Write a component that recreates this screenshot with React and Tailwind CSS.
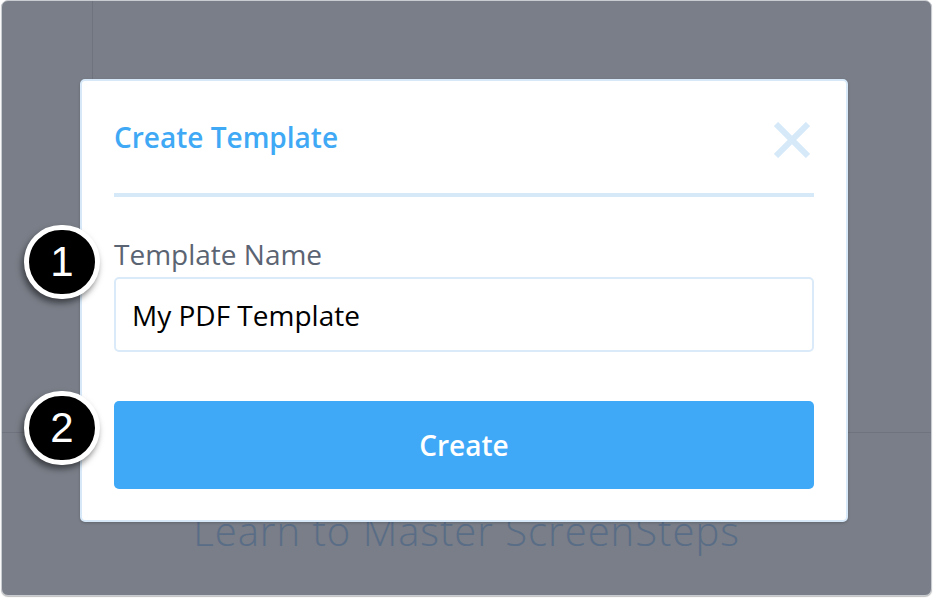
export default function App() {
  const font = { fontFamily: '"Open Sans", "Noto Sans", sans-serif' };
  const digit = { fontFamily: '"Liberation Sans", Arial, sans-serif' };
  return (
    <div className="relative w-[934px] h-[598px] bg-white overflow-hidden" style={font}>
      {/* background app frame */}
      <div className="absolute left-[1px] top-0 w-[931px] h-[596px] rounded-[7px] border border-[#c9ccd0] bg-[#797e88] overflow-hidden flex flex-col shadow-[0_1px_1px_rgba(0,0,0,0.25)]">
        <div className="h-[432px] shrink-0 flex border-b border-[#6f737d]">
          <div className="w-[91px] border-r border-[#6f737d]" />
          <div className="flex-1" />
        </div>
        <div className="flex-1 flex justify-center pt-[78px]">
          <span className="text-[40px] font-light text-[#5a6d86] leading-none tracking-[1px]">
            Learn to Master ScreenSteps
          </span>
        </div>
      </div>

      {/* modal */}
      <div className="absolute left-[80px] top-[79px] w-[768px] h-[443px] bg-white rounded-[5px] border-2 border-[#d7e9f8] shadow-[0_1px_3px_rgba(0,0,0,0.2)] px-[32px]">
        <div className="h-[112px] pt-[41px] flex items-start justify-between">
          <h1 className="mt-[1px] text-[28px] font-semibold text-[#3fa9f5] leading-none">Create Template</h1>
          <svg width="36" height="36" viewBox="0 0 36 36" className="mr-[4px]">
            <path d="M2 2 L34 34 M34 2 L2 34" stroke="#d6e9f9" strokeWidth="6" strokeLinecap="butt" />
          </svg>
        </div>
        <div className="h-[4px] bg-[#d6e9f9]" />
        <div className="pt-[43px]">
          <label className="block text-[28px] text-[#5b6472] leading-none">Template Name</label>
          <div className="mt-[9px] h-[75px] rounded-[5px] border-2 border-[#dbeaf8] flex items-center px-[16px]">
            <span className="text-[28px] text-black leading-none">My PDF Template</span>
          </div>
        </div>
        <button className="mt-[49px] w-full h-[88px] rounded-[5px] bg-[#3fa9f8] flex items-center justify-center">
          <span className="text-[28px] font-semibold text-white leading-none">Create</span>
        </button>
      </div>

      {/* callout badges */}
      <div className="absolute left-[24px] top-[225px] w-[76px] h-[74px] rounded-full bg-black border-[5px] border-white shadow-[-2px_4px_6px_rgba(0,0,0,0.5)] flex items-center justify-center">
        <span className="text-white text-[42px] leading-none" style={digit}>1</span>
      </div>
      <div className="absolute left-[24px] top-[391px] w-[76px] h-[74px] rounded-full bg-black border-[5px] border-white shadow-[-2px_4px_6px_rgba(0,0,0,0.5)] flex items-center justify-center">
        <span className="text-white text-[42px] leading-none" style={digit}>2</span>
      </div>
    </div>
  );
}
